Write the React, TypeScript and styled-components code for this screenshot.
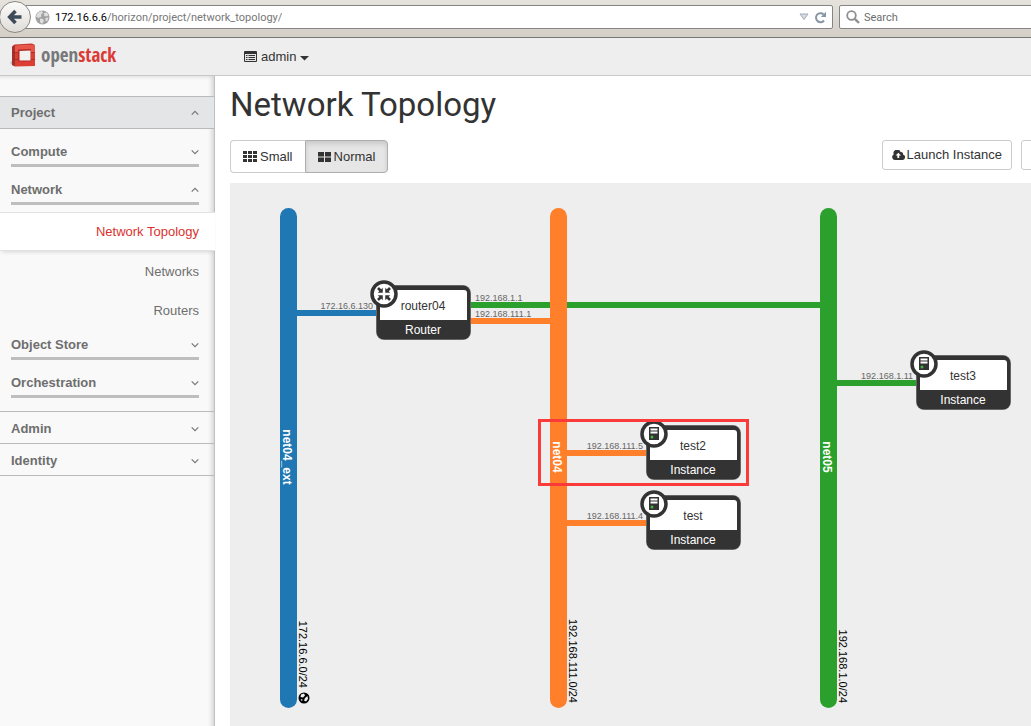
import React from "react";
import styled, { createGlobalStyle } from "styled-components";

const GlobalStyle = createGlobalStyle`
  *, *::before, *::after { box-sizing: border-box; }
  body {
    margin: 0;
    background: #fff;
    color: #333;
    font: 13px/18px "Liberation Sans", Arial, sans-serif;
  }
  button, input { font: inherit; color: inherit; }
`;

const Page = styled.div`
  min-height: 100vh;
  display: flex;
  flex-direction: column;
  overflow: hidden;
`;

/* ---------- browser bar ---------- */

const BrowserBar = styled.div`
  display: flex;
  align-items: flex-start;
  height: 38px;
  padding-top: 5px;
  background: linear-gradient(#e6e3dd, #d3cec6);
  border-bottom: 1px solid #777;
  font: 11px/20px Roboto, "Noto Sans", sans-serif;
`;

const BackButton = styled.button`
  flex: none;
  width: 32px;
  height: 32px;
  margin: -4px 0 0 -1px;
  padding: 0;
  display: grid;
  place-items: center;
  border: 1px solid #8b8883;
  border-radius: 50%;
  background: linear-gradient(#fbfbfa, #e0ddd8);
  z-index: 1;
`;

const Field = styled.div`
  display: flex;
  align-items: center;
  height: 24px;
  border: 1px solid #858585;
  border-radius: 2px;
  background: #fff;
`;

const AddressField = styled(Field)`
  flex: 1;
  gap: 5px;
  margin-left: -8px;
  padding: 0 5px 0 11px;
`;

const Address = styled.div`
  flex: 1;
  padding-top: 2px;
  color: #777;
  b { font-weight: 400; color: #000; }
`;

const SearchField = styled(Field)`
  width: 194px;
  margin: 0 -2px 0 6px;
  padding-left: 6px;
  gap: 4px;
`;

const SearchInput = styled.input`
  flex: 1;
  min-width: 0;
  padding: 2px 0 0;
  border: 0;
  outline: 0;
  background: none;
  &::placeholder { color: #6d6d6d; opacity: 1; }
`;

const IconButton = styled.button`
  display: flex;
  padding: 0;
  border: 0;
  background: none;
`;

/* ---------- top bar ---------- */

const TopBar = styled.header`
  display: flex;
  align-items: center;
  height: 38px;
  background: #eee;
  border-bottom: 1px solid #c8c8c8;
`;

const Brand = styled.a`
  display: flex;
  align-items: center;
  gap: 5px;
  width: 244px;
  padding: 0 0 3px 10px;
  color: #77787a;
  text-decoration: none;
  font: 300 19px/24px "Liberation Sans Narrow", "Open Sans Condensed", "Liberation Sans", sans-serif;
  b { font-weight: 300; color: #dc3a35; }
`;

const ProjectMenu = styled.button`
  display: flex;
  align-items: center;
  gap: 4px;
  padding: 0;
  border: 0;
  background: none;
`;

/* ---------- side navigation ---------- */

const Body = styled.div`
  flex: 1;
  display: flex;
`;

const Sidebar = styled.nav`
  flex: none;
  width: 215px;
  padding-top: 20px;
  background: #f9f9f9;
  border-right: 1px solid #c0c0c0;
  box-shadow: inset -5px 3px 5px -3px rgba(0, 0, 0, 0.16);
`;

const NavButton = styled.button`
  display: flex;
  align-items: center;
  justify-content: space-between;
  border: 0;
  background: none;
  color: #6e6e6e;
  font-weight: 700;
  text-align: left;
`;

const Dashboard = styled(NavButton)<{ $open?: boolean }>`
  width: 100%;
  height: 32px;
  padding: 2px 15px 0 11px;
  border-bottom: 1px solid #b8babc;
  ${(p) => p.$open && "height: 33px; padding-top: 0; border-top: 1px solid #b8babc; background: #e3e5e7;"}
`;

const Groups = styled.div`
  padding: 7px 0 6px;
  border-bottom: 1px solid #b8babc;
`;

const Group = styled(NavButton)`
  width: calc(100% - 26px);
  height: 31px;
  margin: 0 15px 7px 11px;
  padding: 4px 0 0;
  border-bottom: 3px solid #bebebe;
`;

const Panels = styled.div`
  display: flex;
  flex-direction: column;
`;

const Panel = styled.a<{ $active?: boolean }>`
  height: 39px;
  margin-right: -1px;
  padding: 0 16px 0 0;
  line-height: 41px;
  text-align: right;
  text-decoration: none;
  color: ${(p) => (p.$active ? "#d9322d" : "#6e6e6e")};
  ${(p) =>
    p.$active &&
    `line-height: 37px;
     background: #fff;
     border-top: 1px solid #e2e2e2;
     border-bottom: 1px solid #e2e2e2;
     box-shadow: 0 3px 4px -2px rgba(0, 0, 0, 0.14);`}
`;

/* ---------- content ---------- */

const Main = styled.main`
  flex: 1;
  min-width: 0;
  display: flex;
  flex-direction: column;
  padding-left: 15px;
`;

const Title = styled.h1`
  margin: 9px 0 15px;
  font: 400 33px/40px Roboto, sans-serif;
`;

const Toolbar = styled.div`
  display: flex;
  justify-content: space-between;
  align-items: flex-start;
  margin-bottom: 10px;
`;

const ButtonGroup = styled.div`
  display: flex;
`;

const Actions = styled.div`
  display: flex;
  gap: 9px;
  margin-right: -30px;
`;

const Button = styled.button`
  display: flex;
  align-items: center;
  gap: 2px;
  height: 30px;
  min-width: 40px;
  padding: 0 9px;
  border: 1px solid #ccc;
  border-radius: 3px;
  background: #fff;
  white-space: nowrap;
`;

const ModeButton = styled(Button)<{ $active?: boolean }>`
  height: 33px;
  padding: 0 12px;
  gap: 3px;
  border-radius: 4px 0 0 4px;
  border-right: 0;
  ${(p) =>
    p.$active &&
    `border: 1px solid #adadad;
     border-radius: 0 4px 4px 0;
     background: #e6e6e6;
     box-shadow: inset 0 3px 5px rgba(0, 0, 0, 0.125);`}
`;

const Canvas = styled.div`
  flex: 1;
  background: #eee;
`;

const Diagram = styled.svg`
  display: block;
  width: 100%;
  height: 540px;
  font-family: "Liberation Sans", Arial, sans-serif;
`;

const NetworkName = styled.text`
  font-size: 12px;
  font-weight: 700;
  fill: #fff;
  text-anchor: middle;
`;

const Cidr = styled.text`
  font-size: 11px;
  fill: #000;
  text-anchor: end;
`;

const Ip = styled.text`
  font-size: 9px;
  fill: #666;
`;

const NodeText = styled.text<{ $light?: boolean }>`
  font-size: 12px;
  fill: ${(p) => (p.$light ? "#fff" : "#333")};
  text-anchor: middle;
`;

const Chevron = ({ up }: { up?: boolean }) => (
  <svg width="8" height="6" viewBox="0 0 8 6" fill="none" stroke="#777" strokeWidth="1.2">
    <path d={up ? "M.7 4.6 4 1.4l3.3 3.2" : "M.7 1.4 4 4.6l3.3-3.2"} />
  </svg>
);

const Logo = () => (
  <svg width="26" height="26" viewBox="0 0 26 26">
    <path d="M0 21 3 17v7z" fill="#c4c4c4" />
    <path d="M2 4.500 5 3v21.500l-3-1.500z" fill="#a3302a" />
    <path d="M2 4.500 4.500 2.500 22 1.500 25 3 5 4z" fill="#c9372f" />
    <path d="M5 4 25 3V24L5 24.500z" fill="#dc3e34" />
    <path d="M5 4 25 3v7H5z" fill="#e8564a" />
    <path d="M8 7.500 21 7v12.500H8z" fill="#b32c25" />
    <path d="M9.500 9 20.500 8.500v10h-11z" fill="#f3f0f0" />
    <path d="M2 11 5 10.500H8M2 17l3 .5H8M21 10.500H25M21 17.500H25" fill="none" stroke="#a62a23" strokeWidth=".8" />
  </svg>
);

const Globe = () => (
  <svg width="15" height="15" viewBox="0 0 15 15">
    <circle cx="7.500" cy="7.500" r="7" fill="#a2a2a2" />
    <path d="M3 2.500 7 1l1 2-2 1.500.5 2L3.500 8 1 6.500zM9 3l3-.5 1.500 3-2.500 1-2-1zM5 8.500l3 .5 1 2-2 3-2-2zM10.500 8l3-.5-1.500 4-1.500-1z" fill="#dedede" />
  </svg>
);

type NodeKind = "Router" | "Instance";

const RouterGlyph = () => (
  <g fill="#333" stroke="#333">
    {[45, 135, 225, 315].map((a) => (
      <g key={a} transform={`rotate(${a})`}>
        <path d="M1.800 0 5.300-3.500V3.500z" stroke="none" />
        <path d="M5 0H8.500" strokeWidth="2.600" />
      </g>
    ))}
  </g>
);

const ServerGlyph = () => (
  <g>
    <path d="M-5-7H5V6H-5z" fill="#333" />
    <path d="M-3.500-5.500h7v2h-7zM-3.500-2.500h7v2h-7z" fill="#fff" />
    <circle cx="-2" cy="3" r="1.500" fill="#3fb53f" />
  </g>
);

const Node = ({ x, y, name, kind }: { x: number; y: number; name: string; kind: NodeKind }) => (
  <g transform={`translate(${x} ${y})`}>
    <rect width="95" height="55" rx="8" fill="#999" />
    <rect x=".5" y=".5" width="94" height="54" rx="7.500" fill="#333" />
    <path d="M4 35V8q0-3 3-3h81q3 0 3 3v27z" fill="#fff" />
    <NodeText x="47" y="25">{name}</NodeText>
    <NodeText $light x="47" y="49">{kind}</NodeText>
    <g transform="translate(8 9)">
      <circle r="12" fill="#fff" stroke="#333" strokeWidth="3.500" />
      {kind === "Router" ? <RouterGlyph /> : <ServerGlyph />}
    </g>
  </g>
);

const BLUE = "#1f77b4";
const ORANGE = "#ff7f2a";
const GREEN = "#2ca02c";

const networks = [
  { x: 50, color: BLUE, name: "net04_ext", cidr: "172.16.6.0/24", external: true },
  { x: 320, color: ORANGE, name: "net04", cidr: "192.168.111.0/24" },
  { x: 590, color: GREEN, name: "net05", cidr: "192.168.1.0/24" },
];

const links = [
  { x: 60, y: 127, width: 90, color: BLUE },
  { x: 236, y: 119, width: 360, color: GREEN },
  { x: 236, y: 135, width: 90, color: ORANGE },
  { x: 330, y: 267, width: 90, color: ORANGE },
  { x: 330, y: 337, width: 90, color: ORANGE },
  { x: 600, y: 197, width: 90, color: GREEN },
];

const addresses = [
  { x: 143, y: 126, ip: "172.16.6.130", end: true },
  { x: 245, y: 118, ip: "192.168.1.1" },
  { x: 245, y: 134, ip: "192.168.111.1" },
  { x: 413, y: 266, ip: "192.168.111.5", end: true },
  { x: 413, y: 336, ip: "192.168.111.4", end: true },
  { x: 683, y: 196, ip: "192.168.1.11", end: true },
];

const Topology = () => (
  <Diagram role="img" aria-label="Network topology">
    {links.map((l) => (
      <rect key={`${l.x}-${l.y}`} x={l.x} y={l.y} width={l.width} height="6" fill={l.color} />
    ))}
    {networks.map((n) => (
      <g key={n.name}>
        <rect x={n.x} y="25" width="17" height="500" rx="8.500" fill={n.color} />
        <NetworkName transform={`translate(${n.x + 3} 274) rotate(90)`}>{n.name}</NetworkName>
        <Cidr transform={`translate(${n.x + 19} ${n.external ? 505 : 520}) rotate(90)`}>{n.cidr}</Cidr>
        {n.external && (
          <g transform={`translate(${n.x + 24} 515)`}>
            <circle r="5.500" fill="#000" />
            <path d="M-3-3.500 0-4.500 1-2.500-1-.5-3.500-1zM1 0 3.500-2 4 1 2 3.500 0 2.500zM-3.500 1l2 .5-.5 2z" fill="#eee" />
          </g>
        )}
      </g>
    ))}
    {addresses.map((a) => (
      <Ip key={a.ip} x={a.x} y={a.y} textAnchor={a.end ? "end" : "start"}>{a.ip}</Ip>
    ))}
    <Node x={146} y={102} name="router04" kind="Router" />
    <Node x={686} y={172} name="test3" kind="Instance" />
    <Node x={416} y={242} name="test2" kind="Instance" />
    <Node x={416} y={312} name="test" kind="Instance" />
    <rect x="309.500" y="237.500" width="208" height="64" fill="none" stroke="#fb3a3a" strokeWidth="3" />
  </Diagram>
);

export default function App() {
  return (
    <Page>
      <GlobalStyle />
      <BrowserBar>
        <BackButton aria-label="Back">
          <svg width="16" height="16" viewBox="0 0 16 16" fill="none" stroke="#3e4b58" strokeWidth="3.600">
            <path d="M8.500 2 2.700 8l5.800 6M3 8h11.500" />
          </svg>
        </BackButton>
        <AddressField>
          <Globe />
          <Address><b>172.16.6.6</b>/horizon/project/network_topology/</Address>
          <IconButton aria-label="Show history">
            <svg width="10" height="8" viewBox="0 0 10 8"><path d="M1 1h8L5 6.500z" fill="#d5dbe4" stroke="#a3abb6" /></svg>
          </IconButton>
          <IconButton aria-label="Reload">
            <svg width="13" height="13" viewBox="0 0 13 13">
              <path d="M10 9.500A4.500 4.500 0 1 1 9.500 3.300" fill="none" stroke="#8796a5" strokeWidth="2" />
              <path d="M12 .8v5.200H6.800z" fill="#8796a5" />
            </svg>
          </IconButton>
        </AddressField>
        <SearchField>
          <svg width="14" height="14" viewBox="0 0 14 14" fill="none" stroke="#8f8f8f">
            <circle cx="5.500" cy="5.500" r="4.300" strokeWidth="1.800" />
            <path d="m8.800 8.800 4.200 4.200" strokeWidth="2.400" />
          </svg>
          <SearchInput aria-label="Search" placeholder="Search" />
        </SearchField>
      </BrowserBar>

      <TopBar>
        <Brand href="#"><Logo /><span>open<b>stack</b></span></Brand>
        <ProjectMenu>
          <svg width="13" height="11" viewBox="0 0 13 11">
            <path d="M1 0h11q1 0 1 1v9q0 1-1 1H1q-1 0-1-1V1q0-1 1-1z" fill="#333" />
            <path d="M1 3h11v7H1z" fill="#e4e4e4" />
            <path d="M2 4.500h1.500M4.500 4.500h6.500M2 6.500h1.500M4.500 6.500h6.500M2 8.500h1.500M4.500 8.500h6.500" stroke="#333" />
          </svg>
          admin
          <svg width="9" height="8" viewBox="0 0 9 8"><path d="M0 3h9L4.500 7.500z" fill="#333" /></svg>
        </ProjectMenu>
      </TopBar>

      <Body>
        <Sidebar>
          <Dashboard $open>Project <Chevron up /></Dashboard>
          <Groups>
            <Group>Compute <Chevron /></Group>
            <Group>Network <Chevron up /></Group>
            <Panels>
              <Panel href="#" $active>Network Topology</Panel>
              <Panel href="#">Networks</Panel>
              <Panel href="#">Routers</Panel>
            </Panels>
            <Group>Object Store <Chevron /></Group>
            <Group>Orchestration <Chevron /></Group>
          </Groups>
          <Dashboard>Admin <Chevron /></Dashboard>
          <Dashboard>Identity <Chevron /></Dashboard>
        </Sidebar>

        <Main>
          <Title>Network Topology</Title>
          <Toolbar>
            <ButtonGroup>
              <ModeButton>
                <svg width="14" height="11" viewBox="0 0 14 11" fill="#333">
                  <path d="M0 0h4v3H0zM5 0h4v3H5zM10 0h4v3h-4zM0 4h4v3H0zM5 4h4v3H5zM10 4h4v3h-4zM0 8h4v3H0zM5 8h4v3H5zM10 8h4v3h-4z" />
                </svg>
                Small
              </ModeButton>
              <ModeButton $active>
                <svg width="13" height="10" viewBox="0 0 13 10" fill="#333">
                  <path d="M0 0h6v4.500H0zM7 0H13v4.500H7zM0 5.500h6V10H0zM7 5.500H13V10H7z" />
                </svg>
                Normal
              </ModeButton>
            </ButtonGroup>
            <Actions>
              <Button>
                <svg width="13" height="10" viewBox="0 0 13 10">
                  <path d="M3 10a3 3 0 0 1-1.300-5.600A3.600 3.600 0 0 1 8.500 2 2 2 0 0 1 11 4.500 2.800 2.800 0 0 1 10.200 10z" fill="#333" />
                  <path d="M6.300 2.800 9 5.600H7.200V8H5.400V5.600H3.600z" fill="#fff" />
                </svg>
                Launch Instance
              </Button>
              <Button aria-label="Create Network" />
            </Actions>
          </Toolbar>
          <Canvas><Topology /></Canvas>
        </Main>
      </Body>
    </Page>
  );
}
